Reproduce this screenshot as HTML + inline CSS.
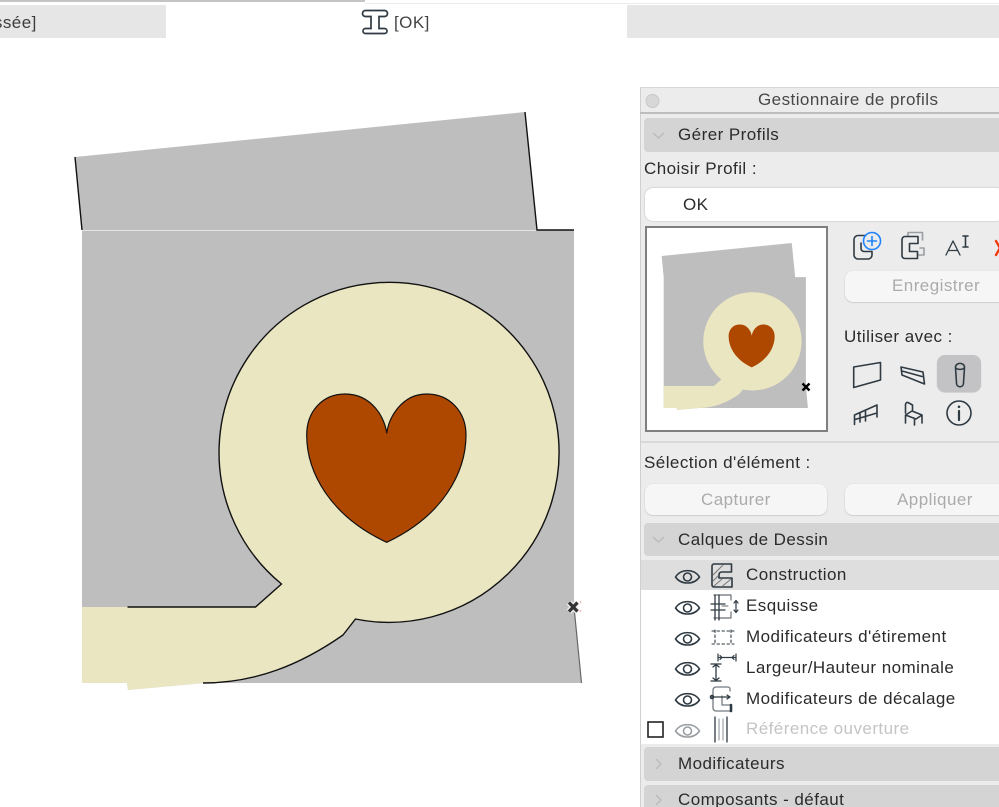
<!DOCTYPE html>
<html lang="fr"><head><meta charset="utf-8"><title>Gestionnaire de profils</title>
<style>
html,body{margin:0;padding:0;background:#fff;width:999px;height:807px;overflow:hidden}
#p{position:relative;width:999px;height:807px;overflow:hidden;font-family:"Liberation Sans",sans-serif;color:#2b2b2b}
.r{position:absolute}
.t{position:absolute;white-space:nowrap;font-size:17px;line-height:20px;letter-spacing:.45px}
.hd{position:absolute;left:644px;width:360px;background:#d4d4d4;border-radius:4px}
.btn{position:absolute;background:#f6f6f6;border-radius:8px;box-shadow:0 .5px 1.5px rgba(0,0,0,.22)}
.dis{color:#ababab}
svg{position:absolute;left:0;top:0}
</style></head><body><div id="p">
<div class="r" style="left:0;top:5px;width:999px;height:33px;background:#e6e6e6"></div>
<div class="r" style="left:0;top:0;width:365px;height:2px;background:#c4c4c4"></div>
<div class="r" style="left:365px;top:3px;width:634px;height:1px;background:#ebebeb"></div>
<div class="r" style="left:166px;top:5px;width:461px;height:34px;background:#fff"></div>
<div class="t" style="left:-16px;top:13px;color:#3c3c3c">assée]</div>
<div class="t" style="left:394px;top:13px;color:#444">[OK]</div>

<div class="r" style="left:640px;top:88px;width:359px;height:719px;background:#ececec;border-left:1px solid #d0d0d0;box-sizing:border-box"></div>
<div class="r" style="left:640px;top:87px;width:359px;height:1px;background:#d8d8d8"></div>
<div class="r" style="left:640px;top:112px;width:359px;height:2px;background:#bdbdbd"></div>
<div class="hd" style="top:118px;height:34px"></div>
<div class="r" style="left:645px;top:188px;width:360px;height:33px;background:#fff;border-radius:8px;box-shadow:0 0 1.5px rgba(0,0,0,.3)"></div>
<div class="r" style="left:645px;top:226px;width:183px;height:206px;background:#fff;border:2px solid #7f7f7f;box-sizing:border-box"></div>
<div class="btn" style="left:845px;top:271px;width:165px;height:31px"></div>
<div class="r" style="left:937px;top:355px;width:44px;height:37px;background:#c3c3c5;border-radius:8px;box-shadow:0 .5px 1px rgba(0,0,0,.2)"></div>
<div class="r" style="left:641px;top:441px;width:358px;height:2px;background:#d9d9d9"></div>
<div class="btn" style="left:645px;top:484px;width:182px;height:31px"></div>
<div class="btn" style="left:845px;top:484px;width:165px;height:31px"></div>
<div class="hd" style="top:523px;height:33px"></div>
<div class="r" style="left:641px;top:590px;width:358px;height:154px;background:#fff"></div>
<div class="r" style="left:641px;top:560px;width:358px;height:30px;background:#dedede"></div>
<div class="hd" style="top:747px;height:34px"></div>
<div class="hd" style="top:785px;height:34px"></div>

<svg width="999" height="807" viewBox="0 0 999 807" fill="none">
<defs>
<path id="heart" d="M386.700 433.300C385 418 372 394 345 394C322 394 306.700 412 306.700 435C306.700 472 330 516 386.700 542.300C443 516 466 472 466 435C466 412 450 394 426.700 394C402 394 389 417 386.700 433.300Z"/>
<g id="draw">
<path d="M75 157L525 112L537 230H574V607L581 683H204L128 690L127 683H82V231L75 157Z" fill="#bebebe"/>
<path d="M281.500 584A170 170 0 1 1 355.500 619L343 635C300 665 255 683 204 683L128 690L127 683H82V607H255.500Z" fill="#eae6c1"/>
<use href="#heart" fill="#ae4700"/>
</g>
</defs>
<!-- main drawing -->
<use href="#draw"/>
<line x1="82" y1="230.500" x2="537" y2="230.500" stroke="#e4e4e4"/>
<g stroke="#111" stroke-width="1.400">
<path d="M75 157L82 230M525 112L537 230H574"/>
<path d="M127.500 607H255.500L281.500 584A170 170 0 1 1 355.500 619L343 635C300 665 255 683 203 683"/>
<use href="#heart" stroke-width="1.200"/>
</g>
<line x1="574" y1="607" x2="581.500" y2="683" stroke="#666" stroke-width="1.200"/>
<path d="M569 602.500L577.500 611.500M577.500 602.500L569 611.500" stroke="#eee" stroke-width="6"/>
<path d="M569 602.500L577.500 611.500M577.500 602.500L569 611.500" stroke="#333" stroke-width="3.200"/>
<path d="M580 601l1 2M580 612l1-2" stroke="#f5a0a0"/>

<!-- tab i-beam -->
<path d="M365.500 10.500H384.500A2 2 0 0 1 384.500 16.500H379V28.500H384.500A2 2 0 0 1 384.500 33.500H365.500A2 2 0 0 1 365.500 28.500H371V16.500H365.500A2 2 0 0 1 365.500 10.500Z" stroke="#2f3a42" stroke-width="1.700" fill="#fff"/>

<!-- title dot -->
<circle cx="652.500" cy="101" r="6.500" fill="#d7d7d7" stroke="#c8c8c8"/>
<!-- chevrons -->
<path d="M653 133L658.500 138L664 133M653 537L658.500 542L664 537" stroke="#bcbcbc" stroke-width="1.500"/>
<path d="M656 759L661 764L656 769M656 795L661 800L656 805" stroke="#bcbcbc" stroke-width="1.500"/>

<!-- preview -->
<g transform="translate(640 210.600) scale(.289)"><use href="#draw"/></g>
<path d="M802.500 383.500L809.500 390.500M809.500 383.500L802.500 390.500" stroke="#000" stroke-width="2.400"/>

<g stroke="#2f3a42" stroke-width="1.600" stroke-linejoin="round" stroke-linecap="round">
<!-- new profile -->
<path d="M866 235.500H858A4 4 0 0 0 854 239.500V255A4 4 0 0 0 858 259H868A4 4 0 0 0 872 255V251.500H864A3 3 0 0 1 861 248.500V243"/>
<circle cx="872" cy="241" r="8.500" fill="#ececec" stroke="#1f83ff"/>
<path d="M872 236.500V245.500M867.500 241H876.500" stroke="#1f83ff"/>
<!-- save-as -->
<path d="M908 236V232.500H922.500V240M920 248H924V255H914" stroke="#9a9ea2"/>
<path d="M918 236.500H905A3 3 0 0 0 902 239.500V255A3 3 0 0 0 905 258.500H917.500V251.500H909.500V243.500H918Z" fill="#ececec"/>
<!-- rename -->
<path d="M946 255L953 241L960 255M948.500 250.500H957.500" stroke-width="1.300"/>
<path d="M963 236H968M965.500 236V247M963 247H968" stroke-width="1.600"/>
<path d="M996 241L1004 255M1004 241L996 255" stroke="#ee3a12" stroke-width="2.400"/>
<!-- used with -->
<path d="M853.700 367L880.500 362.500V380L853.700 387.500Z"/>
<path d="M901 367L923 372L924.500 384L902 375ZM902 371L922 376.500"/>
<path d="M955.500 367.500C955.500 362 964.500 362 964.500 367.500L963.500 383C963.500 388 956.500 388 956.500 383ZM955.500 367.500C956.500 370 963.500 370 964.500 367.500"/>
<path d="M854.500 415L877 405M855 419.500L877 413M854.500 415V424.500M865.500 410V421M877 405V417M860 413V422"/>
<path d="M905.500 413V404.500Q906 402 908 402.500L912.500 405V411M905.500 415L912 411L922 415L916 419ZM905.500 415V423M914.500 419V425M922 415V423"/>
<circle cx="959" cy="413" r="12"/>
<path d="M959 411V420" stroke-width="2.200"/>
<circle cx="959" cy="406.800" r=".8" fill="#2f3a42" stroke-width="1"/>
<!-- eyes -->
<g id="eye"><path d="M675.500 577C681 568.500 694 568.500 699.500 577C694 585 681 585 675.500 577Z"/><circle cx="687.500" cy="577" r="4"/></g>
<use href="#eye" y="31"/><use href="#eye" y="62"/><use href="#eye" y="92"/><use href="#eye" y="123"/>
<g stroke="#9a9ea2"><use href="#eye" y="154"/></g>
<!-- construction -->
<path d="M714.500 564H731.500V572H722Q719 572 719 575V578H732V587H714.500Q712 587 712 585V566Q712 564 714.500 564Z" fill="#dedede"/>
<path d="M713 575L723 565M713 581L718 576M714 586L722 579M722 586.500L731 579" stroke-width="1" stroke="#777"/>
<!-- esquisse -->
<path d="M714 595H731V600M731 612V618H714" stroke="#6b7277" stroke-width="1.200"/>
<path d="M711 604H725M711 610H725M715 595V620M719 595V620" stroke-width="1.300"/>
<path d="M722 606h6" stroke="#666" stroke-width="1"/>
<path d="M736 601V612M734 603L736 600.500L738 603M734 610L736 612.500L738 610" stroke-width="1.200"/>
<!-- stretch -->
<path d="M715 630V645M731 630V645M712 631H734M712 644H734" stroke-width="1.100" stroke-dasharray="2.500 2.500"/>
<!-- nominal -->
<path d="M718 657.500H736M718 654V661M736 654V661M722 657.500L720 655.500M722 657.500L720 659.500M732 657.500L734 655.500M732 657.500L734 659.500" stroke-width="1.200"/>
<path d="M711 664H721M711 681H721M716 664V681M713 667L716 664.500L719 667M713 678L716 680.500L719 678" stroke-width="1.300"/>
<!-- offset -->
<path d="M730 691V689A2 2 0 0 0 728 687H716A3 3 0 0 0 713 690V708A3 3 0 0 0 716 711H731V705H722V696" stroke="#727a7f" stroke-width="1.300"/>
<path d="M712 697H730M727 695L730 697L727 699" stroke-width="1.300"/>
<circle cx="712" cy="697" r="1.500"/>
<path d="M731 705V711" stroke-width="2.600"/>
<!-- ref opening -->
<path d="M715 717V742M727 717V742" stroke-width="1.300"/>
<path d="M719 719V740M723 719V740" stroke="#8a8f93" stroke-width="1"/>
<rect x="648" y="722" width="15" height="15" stroke="#222" stroke-width="1.600" stroke-linejoin="miter"/>
</g>
</svg>

<div class="t" style="left:758px;top:90px;color:#484848">Gestionnaire de profils</div>
<div class="t" style="left:678px;top:125px">Gérer Profils</div>
<div class="t" style="left:644px;top:159px">Choisir Profil :</div>
<div class="t" style="left:683px;top:195px">OK</div>
<div class="t dis" style="left:892px;top:276px">Enregistrer</div>
<div class="t" style="left:844px;top:327px">Utiliser avec :</div>
<div class="t" style="left:644px;top:453px">Sélection d'élément :</div>
<div class="t dis" style="left:701px;top:490px">Capturer</div>
<div class="t dis" style="left:897px;top:490px">Appliquer</div>
<div class="t" style="left:678px;top:530px">Calques de Dessin</div>
<div class="t" style="left:746px;top:565px">Construction</div>
<div class="t" style="left:746px;top:596px">Esquisse</div>
<div class="t" style="left:746px;top:627px">Modificateurs d'étirement</div>
<div class="t" style="left:746px;top:658px">Largeur/Hauteur nominale</div>
<div class="t" style="left:746px;top:689px">Modificateurs de décalage</div>
<div class="t" style="left:746px;top:719px;color:#c4c4c4">Référence ouverture</div>
<div class="t" style="left:678px;top:754px">Modificateurs</div>
<div class="t" style="left:678px;top:790px">Composants - défaut</div>
</div></body></html>
